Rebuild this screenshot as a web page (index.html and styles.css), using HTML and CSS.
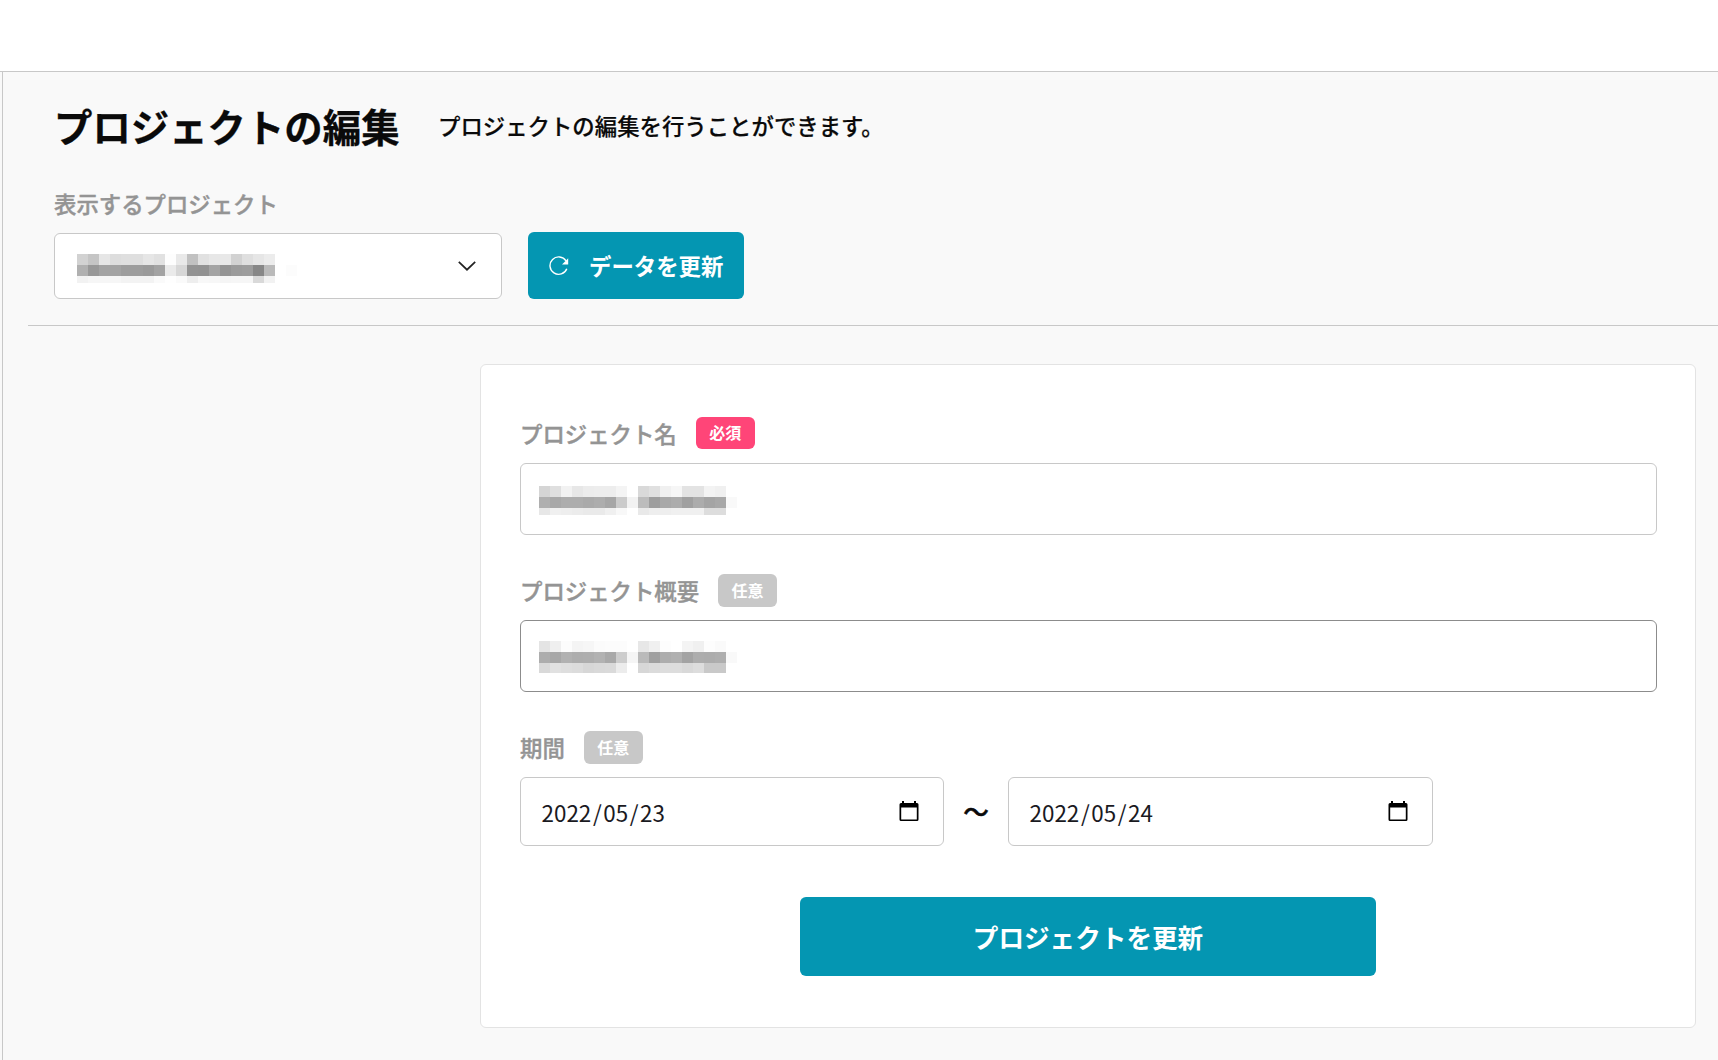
FILE: index.html
```html
<!DOCTYPE html>
<html lang="ja">
<head>
    <meta charset="UTF-8">
    <meta name="viewport" content="width=device-width, initial-scale=1.0">
    <title>プロジェクトの編集</title>
    <link rel="stylesheet" href="styles.css">
</head>
<body>
    <header class="header"></header>
    <main class="main">
        <section class="top">
            <div class="title-row">
                <h1>プロジェクトの編集</h1>
                <p>プロジェクトの編集を行うことができます。</p>
            </div>
            <div class="top-label">表示するプロジェクト</div>
            <div class="controls">
                <div class="select">
                    <svg class="mosaic" data-name="select" width="220" height="29"></svg>
                    <svg class="chevron" width="18" height="10" viewBox="0 0 18 10" fill="none" stroke="#222" stroke-width="1.7">
                        <path d="M0.8 0.8L9 8.7L17.2 0.8"/>
                    </svg>
                </div>
                <button class="btn refresh" type="button">
                    <svg width="20" height="20" viewBox="0 0 20 20" fill="none">
                        <path d="M17.8 12.8A8.7 8.7 0 1 1 17 4.9" stroke="#fff" stroke-width="1.4"/>
                        <path d="M19.2 2.2V8.4H13Z" fill="#fff"/>
                    </svg>
                    <span>データを更新</span>
                </button>
            </div>
        </section>

        <form class="card">
            <div class="label-row first">
                <label>プロジェクト名</label>
                <span class="badge required">必須</span>
            </div>
            <div class="input">
                <svg class="mosaic" data-name="name" width="198" height="29"></svg>
            </div>

            <div class="label-row">
                <label>プロジェクト概要</label>
                <span class="badge">任意</span>
            </div>
            <div class="input focus">
                <svg class="mosaic" data-name="summary" width="198" height="32"></svg>
            </div>

            <div class="label-row">
                <label>期間</label>
                <span class="badge">任意</span>
            </div>
            <div class="dates">
                <div class="date">
                    <div><span>2022</span>/<span>05</span>/<span>23</span></div>
                    <svg width="20" height="21" viewBox="0 0 20 21">
                        <path d="M3 0H5V2H15V0H17V2H18A1.5 1.5 0 0 1 19.5 3.5V18.5A1.5 1.5 0 0 1 18 20H2A1.5 1.5 0 0 1 .5 18.5V3.5A1.5 1.5 0 0 1 2 2H3ZM2.2 6.5V18.4H17.8V6.5Z" fill-rule="evenodd"/>
                    </svg>
                </div>
                <span class="tilde">〜</span>
                <div class="date">
                    <div><span>2022</span>/<span>05</span>/<span>24</span></div>
                    <svg width="20" height="21" viewBox="0 0 20 21">
                        <path d="M3 0H5V2H15V0H17V2H18A1.5 1.5 0 0 1 19.5 3.5V18.5A1.5 1.5 0 0 1 18 20H2A1.5 1.5 0 0 1 .5 18.5V3.5A1.5 1.5 0 0 1 2 2H3ZM2.2 6.5V18.4H17.8V6.5Z" fill-rule="evenodd"/>
                    </svg>
                </div>
            </div>

            <button class="btn submit" type="button">プロジェクトを更新</button>
        </form>
    </main>

    <script>
        // Masked project names: gray level per 11px cell, row by row
        const masks = {
            select: [
                'd2 c5 e6 dd df df e6 e1 fd e9 c1 e1 e7 e8 d2 df e6 ec',
                'b0 98 a3 a3 9d 9d 9a a3 ea d7 93 92 a4 94 9b 9d 87 ba ff fc',
                'f2 f6 f6 f6 f3 f3 f3 fa fe fa ee f8 f7 f5 f6 f6 d9 f2'
            ],
            name: [
                'd5 df f2 e7 ec ed ed f4 ff d9 e0 f0 f6 e3 e3 f3 f0',
                'af a8 ad ad aa ad a6 cb f2 bc 9e a8 ac a0 ac a4 a8 f9',
                'e7 f0 ee ec ea ea f0 f8 ff e9 ee ee f0 f0 f0 dd dd'
            ],
            summary: [
                'e4 ef fc f4 f6 fb fc fc ff e7 f0 fd ff f4 f0 fd fa',
                'ad a7 b1 ad ae b2 a9 cd f5 ba a0 ad b0 a3 ad ac ae f9',
                'd9 e1 de dc d7 d9 da ec ff d7 db dd dd d9 dd c9 c9'
            ]
        };

        document.querySelectorAll('.mosaic').forEach(svg => {
            masks[svg.dataset.name].forEach((row, y) => {
                row.split(' ').forEach((tone, x) => {
                    let rect = document.createElementNS('http://www.w3.org/2000/svg', 'rect');
                    rect.setAttribute('x', x * 11);
                    rect.setAttribute('y', y * 11);
                    rect.setAttribute('width', 11);
                    rect.setAttribute('height', 11);
                    rect.setAttribute('fill', '#' + tone + tone + tone);
                    svg.appendChild(rect);
                });
            });
        });
    </script>
</body>
</html>
```
FILE: styles.css
```css
* {
    box-sizing: border-box;
}

body {
    margin: 0;
    background: #f9f9f9;
    color: #0a0a0a;
    font-family: "Noto Sans CJK JP", sans-serif;
    font-size: 22.4px;
    font-weight: 500;
}

.header {
    height: 72px;
    background: #fff;
    border-bottom: 1px solid #c8c8c8;
}

.main {
    margin-left: 2px;
    height: 988px;
    border-left: 1px solid #c8c8c8;
}

.top {
    margin-left: 25px;
    padding: 25px 0 26px 26px;
    border-bottom: 1px solid #c8c8c8;
}

.title-row {
    display: flex;
    align-items: center;
    gap: 38.5px;
    height: 57px;
}

h1 {
    margin: 0;
    padding-bottom: 1px;
    font-size: 38.4px;
    font-weight: 700;
    line-height: 56px;
    -webkit-text-stroke: 0.3px;
}

p {
    margin: 0;
    line-height: 33px;
    -webkit-text-stroke: 0.2px;
}

.top-label {
    margin: 34px 0 14px;
    line-height: 30px;
    color: #949494;
    -webkit-text-stroke: 0.4px;
}

.controls {
    display: flex;
    align-items: flex-end;
    gap: 26px;
}

.select {
    display: flex;
    justify-content: space-between;
    align-items: center;
    width: 448px;
    height: 66px;
    padding: 0 25px 0 22px;
    background: #fff;
    border: 1px solid #c8c8c8;
    border-radius: 6px;
}

.select .mosaic {
    margin-top: 4px;
}

.btn {
    border: 0;
    border-radius: 6px;
    background: #0496b2;
    color: #fff;
    font-family: inherit;
    font-weight: 700;
}

.refresh {
    display: flex;
    align-items: center;
    gap: 20px;
    width: 216px;
    height: 67px;
    padding: 0 0 0 21px;
    font-size: 22.4px;
}

.refresh span {
    padding-bottom: 2px;
}

.card {
    width: 1216px;
    margin: 38px 0 0 477px;
    padding: 52px 38px 51px 39px;
    background: #fff;
    border: 1px solid #e3e3e3;
    border-radius: 6px;
}

.label-row {
    display: flex;
    align-items: center;
    gap: 19px;
    height: 33px;
    margin-bottom: 13px;
    line-height: 33px;
    color: #949494;
    -webkit-text-stroke: 0.4px;
}

.label-row.first {
    height: 32px;
    margin-bottom: 14px;
    line-height: 31px;
}

.badge {
    width: 59px;
    height: 33px;
    border-radius: 6px;
    background: #c8c8c8;
    color: #fff;
    font-size: 16px;
    font-weight: 700;
    line-height: 33px;
    text-align: center;
    -webkit-text-stroke: 0;
}

.badge.required {
    height: 32px;
    background: #ff4578;
    line-height: 31px;
}

.input {
    display: flex;
    align-items: center;
    height: 72px;
    margin-bottom: 39px;
    padding: 2px 18px 0;
    border: 1px solid #c8c8c8;
    border-radius: 6px;
}

.input.focus {
    padding-top: 1px;
    border-color: #8c8c8c;
}

.dates {
    display: flex;
    align-items: center;
}

.date {
    display: flex;
    justify-content: space-between;
    align-items: center;
    width: 424px;
    height: 69px;
    padding: 0 24px 0 19px;
    border: 1px solid #c8c8c8;
    border-radius: 6px;
    font-weight: 400;
    color: #1a1a1f;
}

.tilde + .date {
    width: 425px;
}

.date span {
    padding: 0 1.6px;
}

.date svg {
    margin-bottom: 1px;
    fill: #000;
}

.tilde {
    width: 64px;
    padding-bottom: 2px;
    text-align: center;
    font-size: 25.6px;
    -webkit-text-stroke: 0.5px;
}

.submit {
    display: block;
    width: 576px;
    height: 79px;
    margin: 51px 0 0 280px;
    font-size: 25.6px;
}
```
